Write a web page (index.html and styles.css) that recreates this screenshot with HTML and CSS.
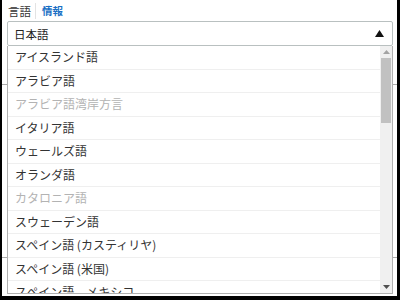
FILE: index.html
```html
<!DOCTYPE html>
<html lang="ja">
<head>
    <meta charset="UTF-8">
    <title>言語</title>
    <link rel="stylesheet" href="styles.css">
</head>
<body>
    <div class="frame">
        <!-- タブ -->
        <div class="tabs">
            <span class="tab">言語</span>
            <span class="sep"></span>
            <span class="tab active">情報</span>
        </div>

        <!-- セレクト -->
        <div class="select">
            <span>日本語</span>
            <svg class="caret" width="9" height="7" viewBox="0 0 9 7"><path d="M4.5 0 L9 7 L0 7 Z" fill="#111"/></svg>
        </div>

        <!-- 背後のコンテンツ -->
        <div class="behind">
            <div class="row r1"></div>
            <div class="row r2"></div>
        </div>

        <!-- ドロップダウン -->
        <div class="dropdown">
            <ul class="options">
                <li>アイスランド語</li>
                <li>アラビア語</li>
                <li class="off">アラビア語湾岸方言</li>
                <li>イタリア語</li>
                <li>ウェールズ語</li>
                <li>オランダ語</li>
                <li class="off">カタロニア語</li>
                <li>スウェーデン語</li>
                <li>スペイン語 (カスティリヤ)</li>
                <li>スペイン語 (米国)</li>
                <li>スペイン語、メキシコ</li>
            </ul>
            <div class="scrollbar">
                <svg class="arrow" width="7" height="4" viewBox="0 0 7 4"><path d="M3.5 0 L7 4 L0 4 Z" fill="#a3a3a3"/></svg>
                <div class="track"><div class="thumb"></div></div>
                <svg class="arrow" width="7" height="4" viewBox="0 0 7 4"><path d="M0 0 L7 0 L3.5 4 Z" fill="#505050"/></svg>
            </div>
        </div>
    </div>
</body>
</html>
```

FILE: styles.css
```css
body {
    margin: 0;
    background: #000;
    font-family: "Noto Sans CJK JP", "Noto Sans", sans-serif;
    color: #333;
}
.frame {
    position: relative;
    background: #fff;
    margin: 0 3px 0 2px;
    height: 296px;
    overflow: hidden;
}
.tabs {
    display: flex;
    align-items: center;
    height: 21px;
    padding-left: 6px;
    font-size: 11.5px;
}
.tab {
    line-height: 20px;
}
.tab.active {
    color: #1a6fc4;
    font-weight: bold;
    font-size: 10.5px;
}
.sep {
    width: 1px;
    height: 16px;
    background: #e3e3e3;
    margin: 0 6px 0 4px;
}
.select {
    display: flex;
    align-items: center;
    justify-content: space-between;
    margin-left: 5px;
    width: 386px;
    height: 25px;
    box-sizing: border-box;
    border: 1px solid #b9c0c0;
    border-radius: 2px;
    padding: 0 8px 0 6px;
    font-size: 11.5px;
    color: #222;
}
.behind .row {
    border-bottom: 1px solid #aaa;
}
.behind .r1 {
    height: 38px;
}
.behind .r2 {
    height: 172px;
}
.dropdown {
    position: absolute;
    left: 5px;
    top: 46px;
    width: 386px;
    height: 248px;
    box-sizing: border-box;
    background: #fff;
    border: 1px solid #b0b0b0;
    border-top: none;
    display: flex;
    overflow: hidden;
}
.options {
    flex: 1;
    list-style: none;
    margin: 0;
    padding: 0;
}
.options li {
    height: 23.5px;
    box-sizing: border-box;
    line-height: 22px;
    padding-left: 7px;
    font-size: 12px;
    color: #333;
    border-bottom: 1px solid #efefef;
}
.options li.off {
    color: #b3b3b3;
}
.scrollbar {
    width: 12px;
    background: #f0f0f0;
    display: flex;
    flex-direction: column;
    align-items: center;
}
.arrow {
    flex: none;
    margin: 4px 0;
}
.track {
    flex: 1;
    width: 100%;
}
.thumb {
    margin: 0 1px;
    height: 65px;
    background: #c1c1c1;
}
```
